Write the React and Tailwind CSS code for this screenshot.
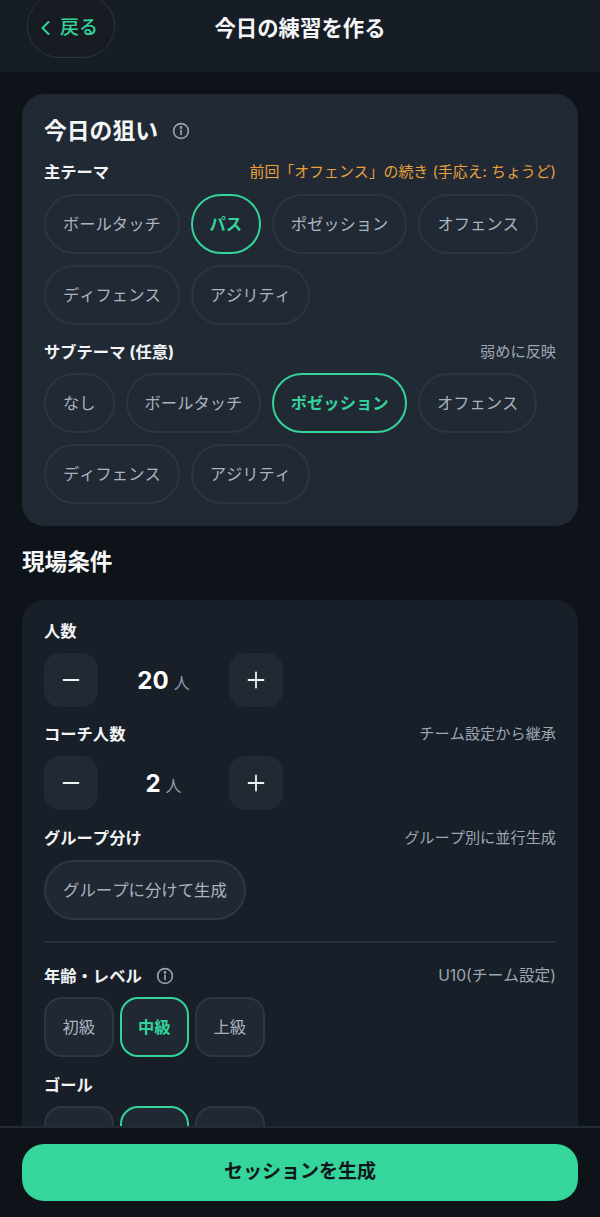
import React from "react";

const font = { fontFamily: 'Inter, "Noto Sans CJK JP", sans-serif' };

function Info({ className = "" }) {
  return (
    <svg width="18" height="18" viewBox="0 0 18 18" fill="none" stroke="#9aa5b1" strokeWidth="1.6" className={className}>
      <circle cx="9" cy="9" r="7.4" />
      <path d="M9 8.2v4.2" strokeLinecap="round" />
      <circle cx="9" cy="5.5" r="0.6" fill="#9aa5b1" />
    </svg>
  );
}

function Pill({ children, on }) {
  return (
    <button
      className={
        "h-[60px] min-w-[70px] rounded-[30px] text-[16.3px] whitespace-nowrap " +
        (on
          ? "border-[2.5px] px-[16.5px] border-[#34d399] text-[#34d399] font-bold"
          : "border-2 px-[17px] border-[#2a3642] text-[#aab4bf]")
      }
    >
      {children}
    </button>
  );
}

function Level({ children, on }) {
  return (
    <button
      className={
        "w-[69.5px] h-[60px] rounded-[18px] bg-[#202833] text-[16.3px] " +
        (on ? "border-[2.5px] border-[#34d399] text-[#34d399] font-bold" : "border-2 border-[#2d3742] text-[#aab4bf]")
      }
    >
      {children}
    </button>
  );
}

function Label({ left, right, rightClass = "text-[15.2px] text-[#9ca6b2]", icon }) {
  return (
    <div className="flex items-center justify-between h-[22px]">
      <div className="flex items-center gap-[14px] text-[16.3px] font-bold text-[#f1f3f5]">
        {left}
        {icon && <Info />}
      </div>
      {right && <div className={rightClass}>{right}</div>}
    </div>
  );
}

function Stepper({ value }) {
  return (
    <div className="flex items-center">
      <button className="w-[54px] h-[54px] rounded-[16px] bg-[#212933] flex items-center justify-center">
        <svg width="18" height="18" viewBox="0 0 18 18" stroke="#f1f3f5" strokeWidth="1.8" strokeLinecap="round">
          <path d="M1.5 9h15" />
        </svg>
      </button>
      <div className="w-[131px] pt-[1px] flex items-baseline justify-center gap-[5px]">
        <span className="text-[24px] font-bold text-white">{value}</span>
        <span className="text-[16px] text-[#949eaa]">人</span>
      </div>
      <button className="w-[54px] h-[54px] rounded-[16px] bg-[#212933] flex items-center justify-center">
        <svg width="18" height="18" viewBox="0 0 18 18" stroke="#f1f3f5" strokeWidth="1.8" strokeLinecap="round">
          <path d="M1.5 9h15M9 1.5v15" />
        </svg>
      </button>
    </div>
  );
}

export default function App() {
  return (
    <div style={font} className="w-[600px] h-[1217px] overflow-hidden flex flex-col bg-[#0e1219] [font-kerning:none]">
      <header className="h-[72px] shrink-0 bg-[#171d25] relative flex items-center justify-center">
        <button className="absolute left-[27px] top-[-6px] w-[88px] h-[64px] rounded-[32px] border border-[#2b3440] bg-[#161c22] flex items-center justify-center gap-[9px] pt-[4px] pr-[4px] text-[#34d399] text-[19px] font-medium">
          <svg width="11" height="16" viewBox="0 0 11 16" fill="none" stroke="#34d399" strokeWidth="2" strokeLinecap="round" strokeLinejoin="round">
            <path d="M8.5 2L2.5 8l6 6" />
          </svg>
          戻る
        </button>
        <h1 className="text-[21.4px] font-bold text-[#f5f6f7] -mt-[15px]">今日の練習を作る</h1>
      </header>

      <main className="flex-1 min-h-0 overflow-hidden px-[22px] pt-[22px]">
        <section className="rounded-[22px] bg-[#212934] px-[22px] pt-[22px] pb-[22px]">
          <div className="flex items-center gap-[14px] h-[30px]">
            <h2 className="text-[22.8px] font-bold text-[#f5f6f7]">今日の狙い</h2>
            <Info />
          </div>
          <div className="mt-[15px]">
            <Label left="主テーマ" right="前回「オフェンス」の続き (手応え: ちょうど)" rightClass="text-[14.9px] text-[#eba13c]" />
          </div>
          <div className="mt-[11px] flex flex-wrap gap-[11px]">
            <Pill>ボールタッチ</Pill>
            <Pill on>パス</Pill>
            <Pill>ポゼッション</Pill>
            <Pill>オフェンス</Pill>
            <Pill>ディフェンス</Pill>
            <Pill>アジリティ</Pill>
          </div>
          <div className="mt-[16px]">
            <Label left="サブテーマ (任意)" right="弱めに反映" />
          </div>
          <div className="mt-[10px] flex flex-wrap gap-[11px]">
            <Pill>なし</Pill>
            <Pill>ボールタッチ</Pill>
            <Pill on>ポゼッション</Pill>
            <Pill>オフェンス</Pill>
            <Pill>ディフェンス</Pill>
            <Pill>アジリティ</Pill>
          </div>
        </section>

        <h2 className="mt-[21px] h-[30px] flex items-center text-[22.6px] font-bold text-[#f5f6f7]">現場条件</h2>

        <section className="mt-[23px] rounded-t-[22px] bg-[#181f28] px-[22px] pt-[20px] pb-[40px]">
          <Label left="人数" />
          <div className="mt-[11px]">
            <Stepper value="20" />
          </div>
          <div className="mt-[16px]">
            <Label left="コーチ人数" right="チーム設定から継承" />
          </div>
          <div className="mt-[11px]">
            <Stepper value="2" />
          </div>
          <div className="mt-[17px]">
            <Label left="グループ分け" right="グループ別に並行生成" />
          </div>
          <div className="mt-[11px]">
            <button className="h-[60px] rounded-[30px] border-2 border-[#2d3742] bg-[#202833] px-[17px] text-[16.4px] text-[#aab4bf]">
              グループに分けて生成
            </button>
          </div>
          <div className="mt-[21px] h-[2px] bg-[#262e39]" />
          <div className="mt-[22px]">
            <Label left="年齢・レベル" right="U10(チーム設定)" rightClass="text-[15.7px] text-[#9ca6b2]" icon />
          </div>
          <div className="mt-[10px] flex gap-[6px]">
            <Level>初級</Level>
            <Level on>中級</Level>
            <Level>上級</Level>
          </div>
          <div className="mt-[17px]">
            <Label left="ゴール" />
          </div>
          <div className="mt-[10px] flex gap-[6px]">
            <Level />
            <Level on />
            <Level />
          </div>
        </section>
      </main>

      <footer className="h-[91px] shrink-0 bg-[#0e1219] border-t-2 border-[#232b35] px-[22px] pt-[16px]">
        <button className="w-full h-[57px] rounded-[22px] bg-[#34d69b] text-[19px] font-bold text-[#10161c]">
          セッションを生成
        </button>
      </footer>
    </div>
  );
}
